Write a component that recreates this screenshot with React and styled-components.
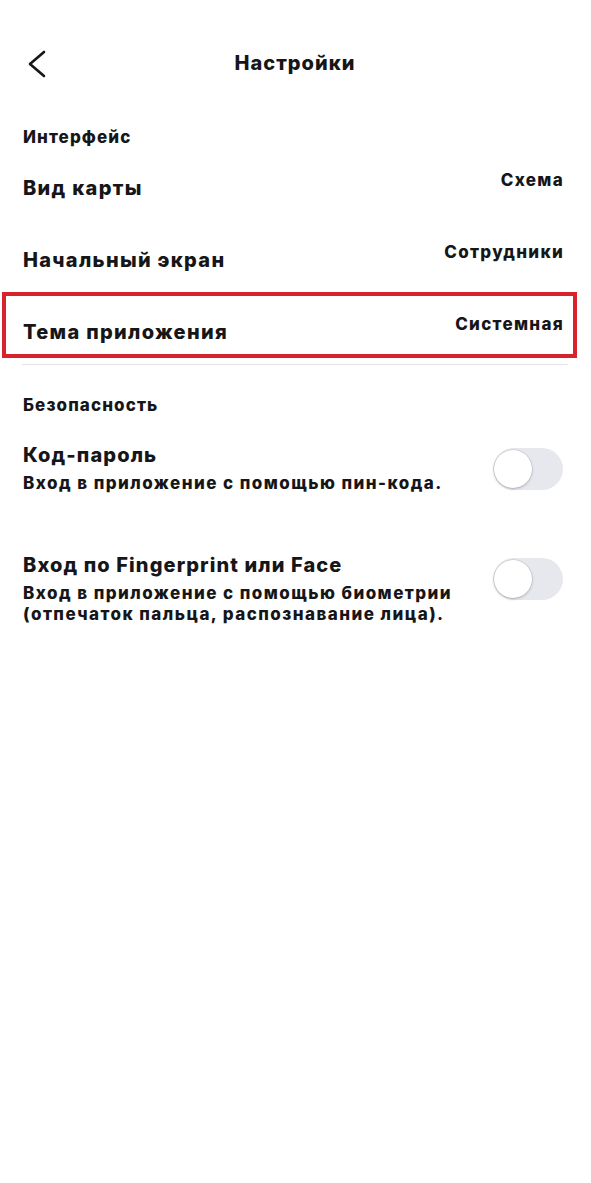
import React from "react";
import styled, { createGlobalStyle } from "styled-components";

const GlobalStyle = createGlobalStyle`
  html, body {
    margin: 0;
    padding: 0;
    background: #ffffff;
  }
  body {
    font-family: Inter, "Noto Sans", "DejaVu Sans", sans-serif;
    color: #161618;
  }
`;

const Screen = styled.div`
  width: 591px;
  min-height: 1183px;
  box-sizing: border-box;
  padding: 0 28px 0 23px;
  background: #ffffff;
`;

const Header = styled.header`
  height: 126px;
  display: flex;
  align-items: center;
  justify-content: center;
  position: relative;
`;

const BackButton = styled.button`
  position: absolute;
  left: 0;
  top: 49px;
  width: 28px;
  height: 30px;
  padding: 0;
  border: none;
  background: none;
  display: flex;
  align-items: center;
  justify-content: center;
  color: #161618;
  cursor: pointer;
`;

const Title = styled.h1`
  margin: 0 0 0 4px;
  font-size: 20px;
  font-weight: 800;
  letter-spacing: 1px;
`;

const SectionTitle = styled.h2`
  margin: ${p => p.$top || 0}px 0 0;
  font-size: 17px;
  line-height: 22px;
  font-weight: 800;
  letter-spacing: 1.1px;
`;

const List = styled.div`
  display: flex;
  flex-direction: column;
  gap: 8px;
`;

const Row = styled.div`
  height: ${p => (p.$highlighted ? 66 : 64)}px;
  box-sizing: border-box;
  display: flex;
  align-items: center;
  justify-content: space-between;
  margin: ${p => (p.$highlighted ? "0 -14px 0 -21px" : "0")};
  padding: ${p => (p.$highlighted ? "0 10px 2px 17px" : "0")};
  border: ${p => (p.$highlighted ? "4px solid #d8232c" : "none")};
`;

const RowLabel = styled.span`
  font-size: 20px;
  line-height: 24px;
  font-weight: 800;
  letter-spacing: 1.3px;
  padding-top: 15px;
`;

const RowValue = styled.span`
  font-size: 17px;
  line-height: 22px;
  font-weight: 800;
  letter-spacing: 1.3px;
  margin-right: -1px;
`;

const Divider = styled.hr`
  margin: 6px -5px 0 -1px;
  border: none;
  border-top: 1.5px solid #e3e3e6;
`;

const ToggleRow = styled.div`
  display: flex;
  align-items: flex-start;
  justify-content: space-between;
  gap: 16px;
  margin-top: ${p => p.$top}px;
`;

const ToggleText = styled.div`
  display: flex;
  flex-direction: column;
`;

const ToggleTitle = styled.span`
  font-size: 20px;
  line-height: 26px;
  font-weight: 800;
  letter-spacing: 1.1px;
`;

const ToggleHint = styled.span`
  font-size: 17px;
  line-height: 21px;
  font-weight: 800;
  letter-spacing: 1.45px;
  margin-top: 5px;
`;

const Switch = styled.span`
  flex: none;
  margin-top: 6px;
  width: 70px;
  height: 42px;
  border-radius: 21px;
  background: #e7e8ed;
  position: relative;

  &::after {
    content: "";
    position: absolute;
    left: 1px;
    top: 2px;
    width: 38px;
    height: 38px;
    border-radius: 50%;
    background: #ffffff;
    box-shadow: 0 1px 3px rgba(0, 0, 0, 0.22), 0 0 0 0.5px rgba(0, 0, 0, 0.12);
  }
`;

function Chevron() {
  return (
    <svg width="20" height="28" viewBox="0 0 20 28" fill="none">
      <path d="M17 2 L3 14 L17 26" stroke="currentColor" strokeWidth="2.6" strokeLinecap="round" strokeLinejoin="round" />
    </svg>
  );
}

const interfaceRows = [
  { label: "Вид карты", value: "Схема" },
  { label: "Начальный экран", value: "Сотрудники" },
  { label: "Тема приложения", value: "Системная", highlighted: true },
];

export default function App() {
  return (
    <Screen>
      <GlobalStyle />
      <Header>
        <BackButton aria-label="Назад">
          <Chevron />
        </BackButton>
        <Title>Настройки</Title>
      </Header>

      <SectionTitle>Интерфейс</SectionTitle>
      <List>
        {interfaceRows.map(row => (
          <Row key={row.label} $highlighted={row.highlighted}>
            <RowLabel>{row.label}</RowLabel>
            <RowValue>{row.value}</RowValue>
          </Row>
        ))}
      </List>
      <Divider />

      <SectionTitle $top={29}>Безопасность</SectionTitle>
      <ToggleRow $top={26}>
        <ToggleText>
          <ToggleTitle>Код-пароль</ToggleTitle>
          <ToggleHint>Вход в приложение с помощью пин-кода.</ToggleHint>
        </ToggleText>
        <Switch />
      </ToggleRow>
      <ToggleRow $top={58}>
        <ToggleText>
          <ToggleTitle>Вход по Fingerprint или Face</ToggleTitle>
          <ToggleHint>
            Вход в приложение с помощью биометрии
            <br />
            (отпечаток пальца, распознавание лица).
          </ToggleHint>
        </ToggleText>
        <Switch />
      </ToggleRow>
    </Screen>
  );
}
